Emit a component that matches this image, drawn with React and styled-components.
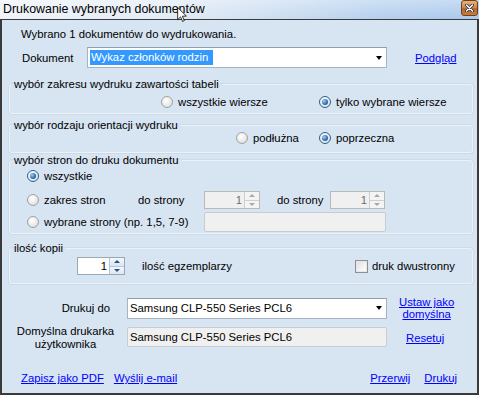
import React from 'react'
import styled, { createGlobalStyle } from 'styled-components'

const GlobalStyle = createGlobalStyle`
  html, body {
    margin: 0;
    padding: 0;
    background: #fff;
  }
  body {
    font-family: "Liberation Sans", Arial, sans-serif;
    font-size: 11.3px;
    color: #000;
  }
`

const Window = styled.div`
  position: relative;
  width: 479px;
  height: 395px;
  display: flex;
  flex-direction: column;
`

const TitleBar = styled.div`
  height: 19px;
  display: flex;
  justify-content: space-between;
  padding: 0 1px 0 3px;
  background:
    linear-gradient(to bottom, rgba(255, 255, 255, 0.35), rgba(255, 255, 255, 0)),
    linear-gradient(to right, #eef3f9 0%, #e2ebf6 35%, #c9dcf1 60%, #b4cfee 80%, #a9c8ec 100%);
`

const Title = styled.span`
  font-family: "Liberation Sans", Arial, sans-serif;
  font-size: 12.4px;
  line-height: 19px;
  color: #000;
`

const CloseButton = styled.div`
  width: 17px;
  height: 16px;
  box-sizing: border-box;
  border: 1px solid #6d3f1c;
  border-radius: 3px;
  background: linear-gradient(to bottom, #e9b27a 0%, #d28a48 45%, #b8652a 55%, #c97b3e 100%);
  display: grid;
  place-items: center;
`

const Cursor = styled.svg`
  position: absolute;
  left: 177px;
  top: 7px;
`

const Client = styled.div`
  flex: 1;
  display: flex;
  flex-direction: column;
  border: 2px solid #3a3a3a;
  border-top-width: 1px;
  background: #d7e4f2;
  padding: 7px 4px 0 7px;
`

const Info = styled.div`
  padding-left: 12px;
  line-height: 14px;
`

const Row = styled.div`
  display: flex;
  align-items: center;
  height: ${p => p.$h || 21}px;
  margin-top: ${p => p.$mt || 0}px;
  padding-left: ${p => p.$pl || 0}px;
`

const FieldLabel = styled.span`
  width: ${p => p.$w}px;
  flex: none;
`

const Combo = styled.div`
  width: ${p => p.$w}px;
  height: 21px;
  box-sizing: border-box;
  flex: none;
  display: flex;
  align-items: center;
  padding-left: 2px;
  background: #fff;
  border: 1px solid #a6b3c4;
  border-top-color: #8e9db0;
`

const Selected = styled.span`
  background: #3399ff;
  color: #fff;
  line-height: 15px;
  padding: 0 5px 0 1px;
`

const Arrow = styled.span`
  margin-left: auto;
  margin-right: 4px;
  width: 0;
  height: 0;
  border-left: 3.5px solid transparent;
  border-right: 3.5px solid transparent;
  border-top: 4px solid #000;
`

const Link = styled.a`
  color: #0000ff;
  text-decoration: underline;
  cursor: pointer;
  margin-left: ${p => p.$ml || 0}px;
  line-height: ${p => p.$lh || 14}px;
  text-align: center;
`

const Group = styled.fieldset`
  margin: ${p => p.$mt || 0}px 0 0;
  padding: 0;
  min-width: 0;
  border: 1px solid #edf2f8;
  border-radius: 3px;
  box-shadow: 0 0 0 0.5px #c4d0dc;
`

const Legend = styled.legend`
  margin-left: 1px;
  padding: 0 3px;
  line-height: 14px;
`

const GroupBody = styled.div`
  display: flex;
  flex-direction: column;
  padding: ${p => p.$pad};
`

const Option = styled.label`
  display: flex;
  align-items: center;
  gap: ${p => p.$gap || 5}px;
  width: ${p => (p.$w ? `${p.$w}px` : 'auto')};
  flex: none;
`

const RadioDot = styled.span`
  width: 12px;
  height: 12px;
  box-sizing: border-box;
  border-radius: 50%;
  border: 1px solid ${p => (p.$checked ? '#2c628b' : '#a2a2a2')};
  background: radial-gradient(circle at 40% 35%, #ffffff 0%, #f0f0f0 40%, #d4d4d4 100%);
  display: grid;
  place-items: center;
  flex: none;

  &::after {
    content: '';
    display: ${p => (p.$checked ? 'block' : 'none')};
    width: 6px;
    height: 6px;
    border-radius: 50%;
    background: radial-gradient(circle at 35% 35%, #9fd0f8 0%, #2d73c2 55%, #0f3d78 100%);
  }
`

const CheckBox = styled.span`
  width: 13px;
  height: 13px;
  box-sizing: border-box;
  border: 1px solid #8f8f8f;
  background: linear-gradient(135deg, #dcdcdc 0%, #f4f4f4 60%, #ffffff 100%);
  box-shadow: inset 0 0 0 1px #e6e6e6;
  flex: none;
`

const SpinBox = styled.div`
  width: ${p => p.$w}px;
  height: 18px;
  box-sizing: border-box;
  flex: none;
  display: flex;
  border: 1px solid ${p => (p.$disabled ? '#b9b9b9' : '#9ca7b3')};
  background: ${p => (p.$disabled ? '#f0f0f0' : '#fff')};
  margin-left: ${p => p.$ml || 0}px;
`

const SpinValue = styled.span`
  flex: 1;
  text-align: right;
  padding-right: 2px;
  line-height: 16px;
  color: ${p => (p.$disabled ? '#6d6d6d' : '#000')};
`

const SpinButtons = styled.div`
  width: 14px;
  display: flex;
  flex-direction: column;
  border-left: 1px solid ${p => (p.$disabled ? '#cfcfcf' : '#b5c4d6')};
`

const SpinButton = styled.div`
  flex: 1;
  display: grid;
  place-items: center;
  background: ${p => (p.$disabled ? '#f4f4f4' : 'linear-gradient(#f2f7fc, #dbe7f4)')};
  border-top: ${p => (p.$down ? `1px solid ${p.$disabled ? '#cfcfcf' : '#b5c4d6'}` : 'none')};

  &::after {
    content: '';
    width: 0;
    height: 0;
    border-left: 3px solid transparent;
    border-right: 3px solid transparent;
    ${p => (p.$down ? 'border-top' : 'border-bottom')}: 3px solid ${p => (p.$disabled ? '#a8a8a8' : '#2b4f7a')};
  }
`

const TextBox = styled.div`
  width: ${p => p.$w}px;
  height: 20px;
  box-sizing: border-box;
  flex: none;
  display: flex;
  align-items: center;
  padding-left: 2px;
  background: ${p => (p.$disabled ? '#f0f0f0' : '#fff')};
  border: 1px solid #c6ccd2;
  border-radius: 2px;
`

const Plain = styled.span`
  width: ${p => (p.$w ? `${p.$w}px` : 'auto')};
  margin-left: ${p => p.$ml || 0}px;
  flex: none;
`

const PrinterLabel = styled.div`
  width: 118px;
  flex: none;
  box-sizing: border-box;
  text-align: ${p => p.$align || 'right'};
  padding-right: ${p => p.$pr || 0}px;
  line-height: 13px;
`

const PrinterRow = styled.div`
  display: flex;
  align-items: ${p => p.$align || 'center'};
  margin-top: ${p => p.$mt || 0}px;
  min-height: 21px;
`

const Footer = styled.div`
  display: flex;
  align-items: center;
  margin-top: 20px;
  padding: 0 16px 0 12px;
`

const Radio = ({ checked, w, children }) => (
  <Option $w={w}>
    <RadioDot $checked={checked} />
    {children}
  </Option>
)

const Spin = ({ w, ml, disabled, value }) => (
  <SpinBox $w={w} $ml={ml} $disabled={disabled}>
    <SpinValue $disabled={disabled}>{value}</SpinValue>
    <SpinButtons $disabled={disabled}>
      <SpinButton $disabled={disabled} />
      <SpinButton $disabled={disabled} $down />
    </SpinButtons>
  </SpinBox>
)

export default function App() {
  return (
    <>
      <GlobalStyle />
      <Window>
        <TitleBar>
          <Title>Drukowanie wybranych dokumentów</Title>
          <CloseButton>
            <svg width="9" height="8" viewBox="0 0 9 8">
              <path d="M1.5 1 L7.5 7 M7.5 1 L1.5 7" stroke="#1d2a4a" strokeWidth="3" strokeLinecap="round" />
              <path d="M1.5 1 L7.5 7 M7.5 1 L1.5 7" stroke="#fff" strokeWidth="1.5" strokeLinecap="round" />
            </svg>
          </CloseButton>
        </TitleBar>
        <Cursor width="10" height="15" viewBox="0 0 12 19">
          <path d="M0.5 0.5 L0.5 16 L4.2 12.5 L6.8 18.3 L9 17.3 L6.5 11.6 L11.5 11.6 Z" fill="#fff" stroke="#000" strokeWidth="1" />
        </Cursor>
        <Client>
          <Info>Wybrano 1 dokumentów do wydrukowania.</Info>

          <Row $mt={6} $pl={13}>
            <FieldLabel $w={65}>Dokument</FieldLabel>
            <Combo $w={300}>
              <Selected>Wykaz członków rodzin</Selected>
              <Arrow />
            </Combo>
            <Link $ml={28}>Podgląd</Link>
          </Row>

          <Group $mt={9}>
            <Legend>wybór zakresu wydruku zawartości tabeli</Legend>
            <GroupBody $pad="5px 0 5px 151px">
              <Row $h={12}>
                <Radio w={158}>wszystkie wiersze</Radio>
                <Radio checked>tylko wybrane wiersze</Radio>
              </Row>
            </GroupBody>
          </Group>

          <Group $mt={4}>
            <Legend>wybór rodzaju orientacji wydruku</Legend>
            <GroupBody $pad="0 0 8px 226px">
              <Row $h={12}>
                <Radio w={83}>podłużna</Radio>
                <Radio checked>poprzeczna</Radio>
              </Row>
            </GroupBody>
          </Group>

          <Group>
            <Legend>wybór stron do druku dokumentu</Legend>
            <GroupBody $pad="0 0 1px 17px">
              <Row $h={18}>
                <Radio checked>wszystkie</Radio>
              </Row>
              <Row $h={18} $mt={6}>
                <Radio w={111}>zakres stron</Radio>
                <Plain $w={66}>do strony</Plain>
                <Spin w={56} disabled value="1" />
                <Plain $w={53} $ml={17}>do strony</Plain>
                <Spin w={55} disabled value="1" />
              </Row>
              <Row $h={20} $mt={3}>
                <Radio w={177}>wybrane strony (np. 1,5, 7-9)</Radio>
                <TextBox $w={182} $disabled />
              </Row>
            </GroupBody>
          </Group>

          <Group $mt={7}>
            <Legend>ilość kopii</Legend>
            <GroupBody $pad="2px 0 8px 67px">
              <Row $h={18}>
                <Spin w={48} value="1" />
                <Plain $w={213} $ml={17}>ilość egzemplarzy</Plain>
                <Option $gap={4}>
                  <CheckBox />
                  druk dwustronny
                </Option>
              </Row>
            </GroupBody>
          </Group>

          <PrinterRow $mt={12}>
            <PrinterLabel $pr={17}>Drukuj do</PrinterLabel>
            <Combo $w={260}>
              Samsung CLP-550 Series PCL6
              <Arrow />
            </Combo>
            <Link $ml={12} $lh={12}>
              Ustaw jako
              <br />
              domyślna
            </Link>
          </PrinterRow>

          <PrinterRow $mt={5} $align="flex-start">
            <PrinterLabel $align="center" $pr={5}>
              Domyślna drukarka
              <br />
              użytkownika
            </PrinterLabel>
            <TextBox $w={260} $disabled style={{ marginTop: 2 }}>
              Samsung CLP-550 Series PCL6
            </TextBox>
            <Link $ml={19} style={{ marginTop: 6 }}>Resetuj</Link>
          </PrinterRow>

          <Footer>
            <Link>Zapisz jako PDF</Link>
            <Link $ml={10}>Wyślij e-mail</Link>
            <Link style={{ marginLeft: 'auto' }}>Przerwij</Link>
            <Link $ml={14}>Drukuj</Link>
          </Footer>
        </Client>
      </Window>
    </>
  )
}
